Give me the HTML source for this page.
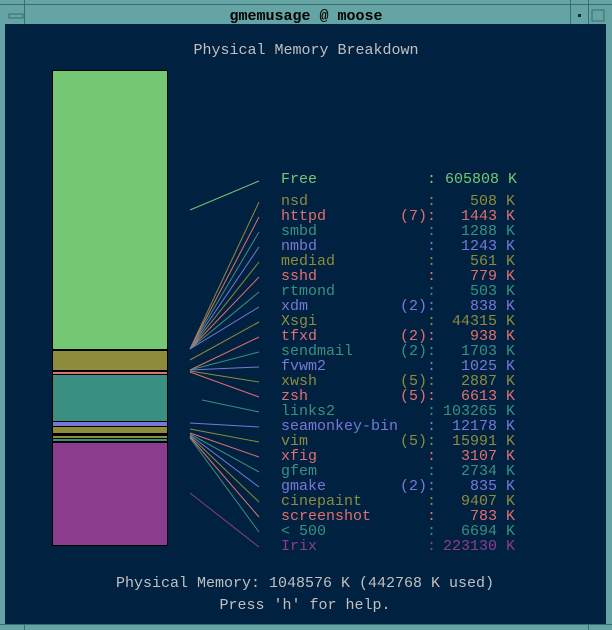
<html><body style="margin:0;background:#000">
<svg width="612" height="630" xmlns="http://www.w3.org/2000/svg" font-family="Liberation Mono, monospace" font-size="15">
<rect width="612" height="630" fill="#64a4a4"/>
<line x1="0" y1="4.5" x2="612" y2="4.5" stroke="#3c6c6c"/>
<line x1="24.5" y1="0" x2="24.5" y2="24" stroke="#3c6c6c"/>
<line x1="570.5" y1="0" x2="570.5" y2="24" stroke="#3c6c6c"/>
<line x1="588.5" y1="0" x2="588.5" y2="24" stroke="#3c6c6c"/>
<line x1="0" y1="624.5" x2="612" y2="624.5" stroke="#3c6c6c"/>
<line x1="24.5" y1="624" x2="24.5" y2="630" stroke="#3c6c6c"/>
<line x1="588.5" y1="624" x2="588.5" y2="630" stroke="#3c6c6c"/>
<rect x="9" y="14" width="14" height="4" fill="none" stroke="#3c6c6c"/>
<rect x="578" y="14" width="3" height="3" fill="#223"/>
<rect x="592" y="10" width="12" height="11" fill="none" stroke="#3c6c6c"/>
<text x="306" y="20" text-anchor="middle" fill="#000" font-weight="bold">gmemusage @ moose</text>
<rect x="5" y="24" width="601" height="600" fill="#002140"/>
<g fill="#c0c0c0" text-anchor="middle">
<text x="306" y="54">Physical Memory Breakdown</text>
<text x="305" y="587">Physical Memory: 1048576 K (442768 K used)</text>
<text x="305" y="609">Press 'h' for help.</text>
</g>
<rect x="52" y="70" width="116" height="476" fill="#000"/>
<g>
<rect x="53" y="71" width="114" height="278" fill="#74c874"/>
<rect x="53" y="351" width="114" height="19" fill="#8c8c3c"/>
<rect x="53" y="372" width="114" height="2" fill="#e07070"/>
<rect x="53" y="375" width="114" height="46" fill="#3a9080"/>
<rect x="53" y="422" width="114" height="4" fill="#7878d8"/>
<rect x="53" y="427" width="114" height="6" fill="#8c8c3c"/>
<rect x="53" y="436" width="114" height="2" fill="#8c8c3c"/>
<rect x="53" y="439" width="114" height="2" fill="#3a9080"/>
<rect x="53" y="443" width="114" height="102" fill="#8c3c8c"/>
</g>
<g stroke-width="1">
<line x1="190" y1="210" x2="259" y2="181" stroke="#74c874"/>
<line x1="190" y1="349" x2="259" y2="202" stroke="#8c8c3c"/>
<line x1="190" y1="349" x2="259" y2="217" stroke="#e07070"/>
<line x1="190" y1="349" x2="259" y2="232" stroke="#3a9080"/>
<line x1="190" y1="349" x2="259" y2="247" stroke="#7878d8"/>
<line x1="190" y1="349" x2="259" y2="262" stroke="#8c8c3c"/>
<line x1="190" y1="349" x2="259" y2="277" stroke="#e07070"/>
<line x1="190" y1="349" x2="259" y2="292" stroke="#3a9080"/>
<line x1="190" y1="349" x2="259" y2="307" stroke="#7878d8"/>
<line x1="190" y1="360" x2="259" y2="322" stroke="#8c8c3c"/>
<line x1="190" y1="370" x2="259" y2="337" stroke="#e07070"/>
<line x1="190" y1="370" x2="259" y2="352" stroke="#3a9080"/>
<line x1="190" y1="370" x2="259" y2="367" stroke="#7878d8"/>
<line x1="190" y1="371" x2="259" y2="382" stroke="#8c8c3c"/>
<line x1="190" y1="372" x2="259" y2="397" stroke="#e07070"/>
<line x1="202" y1="400" x2="259" y2="412" stroke="#3a9080"/>
<line x1="190" y1="423" x2="259" y2="427" stroke="#7878d8"/>
<line x1="190" y1="429" x2="259" y2="442" stroke="#8c8c3c"/>
<line x1="190" y1="433" x2="259" y2="457" stroke="#e07070"/>
<line x1="190" y1="434" x2="259" y2="472" stroke="#3a9080"/>
<line x1="190" y1="435" x2="259" y2="487" stroke="#7878d8"/>
<line x1="190" y1="436" x2="259" y2="502" stroke="#8c8c3c"/>
<line x1="190" y1="437" x2="259" y2="517" stroke="#e07070"/>
<line x1="190" y1="438" x2="259" y2="532" stroke="#3a9080"/>
<line x1="190" y1="493" x2="259" y2="547" stroke="#8c3c8c"/>
</g>
<g>
<g fill="#74c874"><text x="281" y="183">Free</text><text x="427" y="183">: 605808 K</text></g>
<g fill="#8c8c3c"><text x="281" y="205">nsd</text><text x="427" y="205">:</text><text x="497" y="205" text-anchor="end">508</text><text x="506" y="205">K</text></g>
<g fill="#e07070"><text x="281" y="220">httpd</text><text x="427" y="220" text-anchor="end">(7)</text><text x="427" y="220">:</text><text x="497" y="220" text-anchor="end">1443</text><text x="506" y="220">K</text></g>
<g fill="#3a9080"><text x="281" y="235">smbd</text><text x="427" y="235">:</text><text x="497" y="235" text-anchor="end">1288</text><text x="506" y="235">K</text></g>
<g fill="#7878d8"><text x="281" y="250">nmbd</text><text x="427" y="250">:</text><text x="497" y="250" text-anchor="end">1243</text><text x="506" y="250">K</text></g>
<g fill="#8c8c3c"><text x="281" y="265">mediad</text><text x="427" y="265">:</text><text x="497" y="265" text-anchor="end">561</text><text x="506" y="265">K</text></g>
<g fill="#e07070"><text x="281" y="280">sshd</text><text x="427" y="280">:</text><text x="497" y="280" text-anchor="end">779</text><text x="506" y="280">K</text></g>
<g fill="#3a9080"><text x="281" y="295">rtmond</text><text x="427" y="295">:</text><text x="497" y="295" text-anchor="end">503</text><text x="506" y="295">K</text></g>
<g fill="#7878d8"><text x="281" y="310">xdm</text><text x="427" y="310" text-anchor="end">(2)</text><text x="427" y="310">:</text><text x="497" y="310" text-anchor="end">838</text><text x="506" y="310">K</text></g>
<g fill="#8c8c3c"><text x="281" y="325">Xsgi</text><text x="427" y="325">:</text><text x="497" y="325" text-anchor="end">44315</text><text x="506" y="325">K</text></g>
<g fill="#e07070"><text x="281" y="340">tfxd</text><text x="427" y="340" text-anchor="end">(2)</text><text x="427" y="340">:</text><text x="497" y="340" text-anchor="end">938</text><text x="506" y="340">K</text></g>
<g fill="#3a9080"><text x="281" y="355">sendmail</text><text x="427" y="355" text-anchor="end">(2)</text><text x="427" y="355">:</text><text x="497" y="355" text-anchor="end">1703</text><text x="506" y="355">K</text></g>
<g fill="#7878d8"><text x="281" y="370">fvwm2</text><text x="427" y="370">:</text><text x="497" y="370" text-anchor="end">1025</text><text x="506" y="370">K</text></g>
<g fill="#8c8c3c"><text x="281" y="385">xwsh</text><text x="427" y="385" text-anchor="end">(5)</text><text x="427" y="385">:</text><text x="497" y="385" text-anchor="end">2887</text><text x="506" y="385">K</text></g>
<g fill="#e07070"><text x="281" y="400">zsh</text><text x="427" y="400" text-anchor="end">(5)</text><text x="427" y="400">:</text><text x="497" y="400" text-anchor="end">6613</text><text x="506" y="400">K</text></g>
<g fill="#3a9080"><text x="281" y="415">links2</text><text x="427" y="415">:</text><text x="497" y="415" text-anchor="end">103265</text><text x="506" y="415">K</text></g>
<g fill="#7878d8"><text x="281" y="430">seamonkey-bin</text><text x="427" y="430">:</text><text x="497" y="430" text-anchor="end">12178</text><text x="506" y="430">K</text></g>
<g fill="#8c8c3c"><text x="281" y="445">vim</text><text x="427" y="445" text-anchor="end">(5)</text><text x="427" y="445">:</text><text x="497" y="445" text-anchor="end">15991</text><text x="506" y="445">K</text></g>
<g fill="#e07070"><text x="281" y="460">xfig</text><text x="427" y="460">:</text><text x="497" y="460" text-anchor="end">3107</text><text x="506" y="460">K</text></g>
<g fill="#3a9080"><text x="281" y="475">gfem</text><text x="427" y="475">:</text><text x="497" y="475" text-anchor="end">2734</text><text x="506" y="475">K</text></g>
<g fill="#7878d8"><text x="281" y="490">gmake</text><text x="427" y="490" text-anchor="end">(2)</text><text x="427" y="490">:</text><text x="497" y="490" text-anchor="end">835</text><text x="506" y="490">K</text></g>
<g fill="#8c8c3c"><text x="281" y="505">cinepaint</text><text x="427" y="505">:</text><text x="497" y="505" text-anchor="end">9407</text><text x="506" y="505">K</text></g>
<g fill="#e07070"><text x="281" y="520">screenshot</text><text x="427" y="520">:</text><text x="497" y="520" text-anchor="end">783</text><text x="506" y="520">K</text></g>
<g fill="#3a9080"><text x="281" y="535">&lt; 500</text><text x="427" y="535">:</text><text x="497" y="535" text-anchor="end">6694</text><text x="506" y="535">K</text></g>
<g fill="#8c3c8c"><text x="281" y="550">Irix</text><text x="427" y="550">:</text><text x="497" y="550" text-anchor="end">223130</text><text x="506" y="550">K</text></g>
</g>
</svg>
</body></html>
